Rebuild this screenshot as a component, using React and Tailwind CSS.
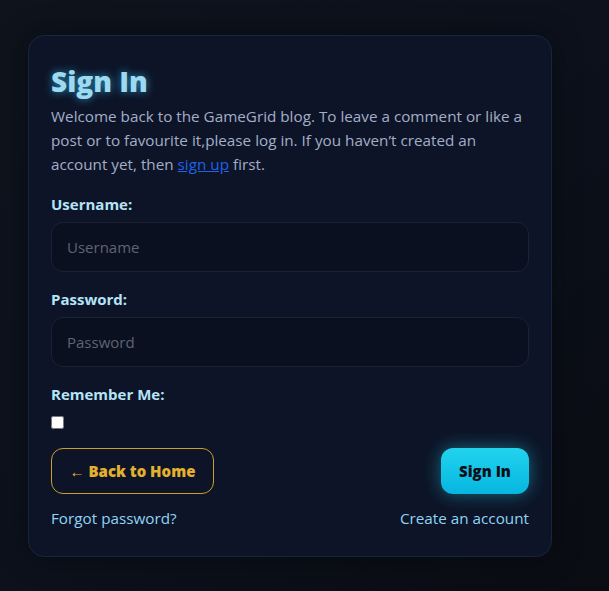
export default function App() {
  return (
    <div className="min-h-[591px] w-full bg-[linear-gradient(135deg,#0e131c_0%,#0c111c_50%,#0a0c12_100%)] px-[28px] pt-[35px] pb-[35px]" style={{ fontFamily: '"Open Sans", "Noto Sans", sans-serif' }}>
      <div className="w-[524px] rounded-[16px] border border-[#13283a] bg-[#0d1427] px-[22px] pt-[28px] pb-[27px] shadow-[0_0_30px_rgba(0,0,0,0.4)]">
        <h1 className="text-[28px] font-black leading-[34px] text-[#9dd9ef] [text-shadow:0_0_8px_rgba(56,189,248,0.7)]">Sign In</h1>
        <p className="mt-[6px] text-[15.25px] leading-[24px] text-[#a3aec8]">
          Welcome back to the GameGrid blog. To leave a comment or like a post or to favourite it,please log in. If you haven’t created an account yet, then{" "}
          <a href="#" className="text-[#1d63ea] underline">sign up</a> first.
        </p>
        <label className="mt-[18px] block text-[15px] font-bold leading-[20px] text-[#b5e3f7]">Username:</label>
        <input placeholder="Username" className="mt-[8px] block h-[50px] w-full rounded-[12px] border border-[#1b2232] bg-[#0a1020] px-[15px] text-[15px] text-[#cbd5e1] placeholder-[#5f6470] outline-none" />
        <label className="mt-[17px] block text-[15px] font-bold leading-[20px] text-[#b5e3f7]">Password:</label>
        <input type="password" placeholder="Password" className="mt-[8px] block h-[50px] w-full rounded-[12px] border border-[#1b2232] bg-[#0a1020] px-[15px] text-[15px] text-[#cbd5e1] placeholder-[#5f6470] outline-none" />
        <label className="mt-[17px] block text-[15px] font-bold leading-[20px] text-[#b5e3f7]">Remember Me:</label>
        <div className="mt-[10px] flex h-[16px] items-center">
          <input type="checkbox" className="m-0 h-[13px] w-[13px] accent-white" />
        </div>
        <div className="mt-[18px] flex items-center justify-between">
          <button className="h-[46px] w-[163px] rounded-[12px] border border-[#c9a12a] text-[15px] font-extrabold text-[#e3b12e]">← Back to Home</button>
          <button className="h-[46px] w-[88px] rounded-[12px] bg-[linear-gradient(180deg,#22d3ee,#06b6e0)] text-[15px] font-extrabold text-[#0a0f1a] shadow-[0_0_18px_rgba(34,211,238,0.45)]">Sign In</button>
        </div>
        <div className="mt-[13px] flex items-center justify-between text-[15.25px] leading-[22px] text-[#8fd4f5]">
          <a href="#">Forgot password?</a>
          <a href="#">Create an account</a>
        </div>
      </div>
    </div>
  );
}
